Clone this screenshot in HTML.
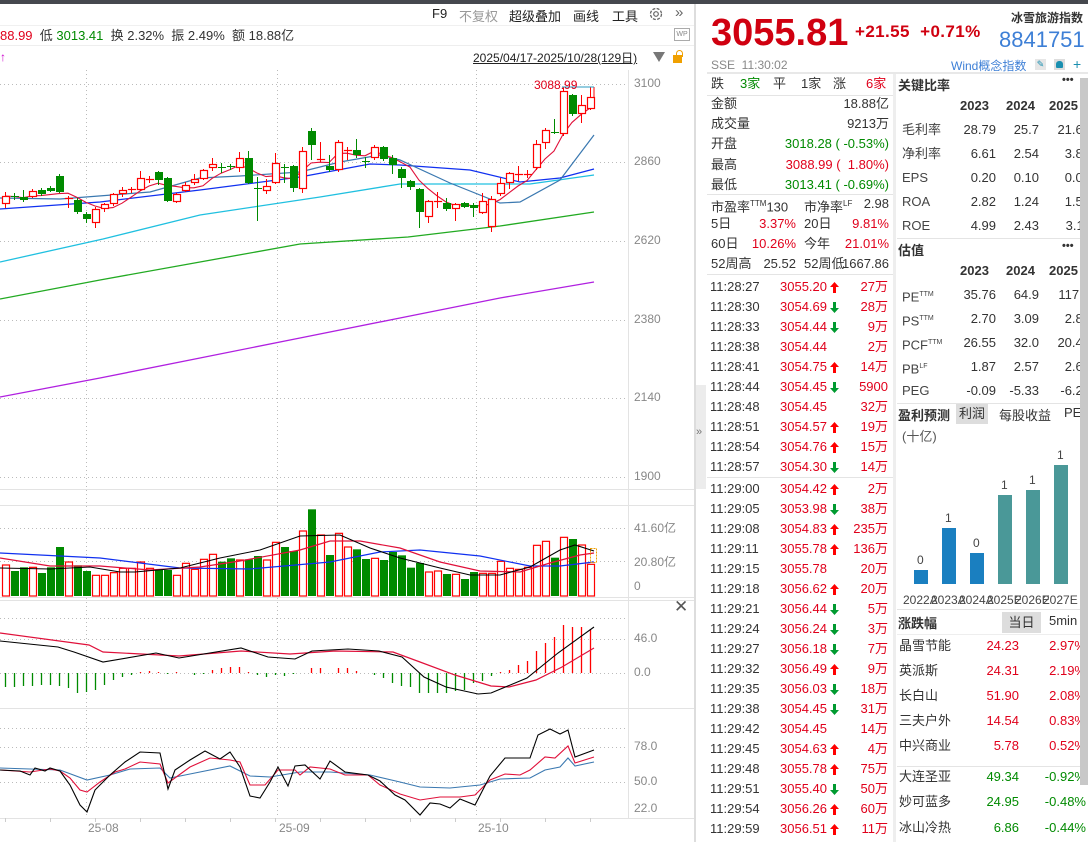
<!DOCTYPE html>
<html><head><meta charset="utf-8">
<style>
*{margin:0;padding:0;box-sizing:border-box}
body{width:1088px;height:842px;overflow:hidden;background:#fff;font-family:"Liberation Sans","Noto Sans CJK SC",sans-serif;color:#333;position:relative}
.a{position:absolute;white-space:nowrap}
.r{color:#e0001b}.g{color:#008a00}.gr{color:#888}
.tk{position:absolute;left:710px;width:178px;height:20px;font-size:13px;line-height:20px}
.tk span{position:absolute}
.tk svg{position:absolute;top:5px;left:120px}
.row{position:absolute;font-size:13px;line-height:20px}
</style></head><body>
<div class="a" style="left:0;top:0;width:1088px;height:4px;background:#45484e"></div>
<div class="a" style="left:0;top:4px;width:694px;height:22px;border-bottom:1px solid #f0f0f0"></div>
<div class="a" style="left:432px;top:6px;font-size:13px;color:#222">F9</div>
<div class="a" style="left:459px;top:6px;font-size:13px;color:#999">不复权</div>
<div class="a" style="left:509px;top:6px;font-size:13px;color:#222">超级叠加</div>
<div class="a" style="left:573px;top:6px;font-size:13px;color:#222">画线</div>
<div class="a" style="left:612px;top:6px;font-size:13px;color:#222">工具</div>
<svg class="a" style="left:648px;top:6px" width="16" height="16" viewBox="0 0 16 16"><circle cx="8" cy="8" r="5.5" fill="none" stroke="#666" stroke-width="1.3" stroke-dasharray="3 1.4"/><circle cx="8" cy="8" r="2.3" fill="none" stroke="#666" stroke-width="1.2"/></svg>
<div class="a" style="left:675px;top:4px;font-size:15px;color:#666">»</div>
<div class="a" style="left:0;top:27px;font-size:13px;line-height:18px"><span class="r">88.99</span> &nbsp;低 <span class="g">3013.41</span> &nbsp;换 2.32% &nbsp;振 2.49% &nbsp;额 18.88亿</div>
<div class="a" style="left:674px;top:28px;width:16px;height:13px;border:1px solid #aaa;font-size:7px;color:#888;text-align:center;line-height:11px">WP</div>
<div class="a" style="left:0;top:45px;width:694px;border-top:1px solid #eee"></div>
<div class="a" style="left:0;top:50px;color:#c0c;font-size:12px">↑</div>
<div class="a" style="left:473px;top:49px;font-size:12px;text-decoration:underline;color:#222">2025/04/17-2025/10/28(129日)</div>
<div class="a" style="left:653px;top:52px;width:0;height:0;border-left:6px solid transparent;border-right:6px solid transparent;border-top:10px solid #777"></div>
<div class="a" style="left:673px;top:55px;width:9px;height:8px;background:#f0a000"></div>
<div class="a" style="left:676px;top:50px;width:7px;height:7px;border:1.5px solid #f0a000;border-bottom:none;border-radius:4px 4px 0 0"></div>

<svg id="ch" class="a" style="left:0;top:0" width="696" height="842"></svg>

<div class="a gr" style="left:634px;top:76px;font-size:12px">3100</div>
<div class="a gr" style="left:634px;top:154px;font-size:12px">2860</div>
<div class="a gr" style="left:634px;top:233px;font-size:12px">2620</div>
<div class="a gr" style="left:634px;top:312px;font-size:12px">2380</div>
<div class="a gr" style="left:634px;top:390px;font-size:12px">2140</div>
<div class="a gr" style="left:634px;top:469px;font-size:12px">1900</div>
<div class="a r" style="left:534px;top:78px;font-size:12px">3088.99</div>
<div class="a gr" style="left:634px;top:519px;font-size:12px">41.60亿</div>
<div class="a gr" style="left:634px;top:553px;font-size:12px">20.80亿</div>
<div class="a gr" style="left:634px;top:579px;font-size:12px">0</div>
<div class="a" style="left:674px;top:597px;font-size:17px;color:#555">✕</div>
<div class="a gr" style="left:634px;top:631px;font-size:12px">46.0</div>
<div class="a gr" style="left:634px;top:665px;font-size:12px">0.0</div>
<div class="a gr" style="left:634px;top:739px;font-size:12px">78.0</div>
<div class="a gr" style="left:634px;top:774px;font-size:12px">50.0</div>
<div class="a gr" style="left:634px;top:801px;font-size:12px">22.0</div>
<div class="a gr" style="left:88px;top:821px;font-size:12px">25-08</div>
<div class="a gr" style="left:279px;top:821px;font-size:12px">25-09</div>
<div class="a gr" style="left:478px;top:821px;font-size:12px">25-10</div>

<div class="a" style="left:694px;top:4px;width:2px;height:838px;background:#ddd"></div>
<div class="a" style="left:696px;top:385px;width:10px;height:104px;background:#ececec"></div>
<div class="a" style="left:696px;top:426px;font-size:11px;color:#777">»</div>

<div class="a" style="left:711px;top:11px;font-size:38px;font-weight:bold;color:#d00010;line-height:44px">3055.81</div>
<div class="a" style="left:855px;top:22px;font-size:17px;font-weight:bold;color:#d00010;letter-spacing:0.4px">+21.55 &nbsp;+0.71%</div>
<div class="a" style="left:1011px;top:9px;font-size:12px;font-weight:bold;color:#333">冰雪旅游指数</div>
<div class="a" style="left:999px;top:27px;font-size:22px;color:#3d7fd6">8841751</div>
<div class="a gr" style="left:711px;top:58px;font-size:12px">SSE &nbsp;11:30:02</div>
<div class="a" style="left:951px;top:57px;font-size:12px;color:#3d7fd6">Wind概念指数</div>
<div class="a" style="left:1035px;top:59px;width:11px;height:11px;background:#e6e6e6;color:#1a8fb0;font-size:9px;text-align:center;line-height:11px">✎</div>
<div class="a" style="left:1054px;top:59px;width:11px;height:11px;background:#ddd"><div style="margin:2px 2px;width:7px;height:7px;background:#1a8fb0;border-radius:3px 3px 1px 1px"></div></div>
<div class="a" style="left:1073px;top:56px;font-size:14px;color:#1a8fb0">+</div>
<div class="a" style="left:707px;top:72px;width:381px;border-top:2px solid #e8e8e8"></div>

<div class="row" style="left:711px;top:74px;width:178px"><span>跌</span><span class="g" style="position:absolute;left:29px">3家</span><span style="position:absolute;left:62px">平</span><span style="position:absolute;left:90px">1家</span><span style="position:absolute;left:122px">涨</span><span class="r" style="position:absolute;left:155px">6家</span></div>
<div class="a" style="left:707px;top:95px;width:186px;border-top:1px solid #e4e4e4"></div>
<div class="row" style="left:711px;top:94px">金额</div><div class="row" style="left:711px;top:94px;width:178px;text-align:right">18.88亿</div>
<div class="row" style="left:711px;top:114px">成交量</div><div class="row" style="left:711px;top:114px;width:178px;text-align:right">9213万</div>
<div class="row" style="left:711px;top:134px">开盘</div><div class="row g" style="left:711px;top:134px;width:178px;text-align:right">3018.28 ( -0.53%)</div>
<div class="row" style="left:711px;top:155px">最高</div><div class="row r" style="left:711px;top:155px;width:178px;text-align:right">3088.99 ( &nbsp;1.80%)</div>
<div class="row" style="left:711px;top:175px">最低</div><div class="row g" style="left:711px;top:175px;width:178px;text-align:right">3013.41 ( -0.69%)</div>
<div class="a" style="left:707px;top:194px;width:186px;border-top:1px solid #e4e4e4"></div>
<div class="row" style="left:711px;top:194px">市盈率<sup style="font-size:8px">TTM</sup>130</div><div class="row" style="left:804px;top:194px">市净率<sup style="font-size:8px">LF</sup></div><div class="row" style="left:804px;top:194px;width:85px;text-align:right">2.98</div>
<div class="row" style="left:711px;top:214px">5日</div><div class="row r" style="left:711px;top:214px;width:85px;text-align:right">3.37%</div><div class="row" style="left:804px;top:214px">20日</div><div class="row r" style="left:804px;top:214px;width:85px;text-align:right">9.81%</div>
<div class="row" style="left:711px;top:234px">60日</div><div class="row r" style="left:711px;top:234px;width:85px;text-align:right">10.26%</div><div class="row" style="left:804px;top:234px">今年</div><div class="row r" style="left:804px;top:234px;width:85px;text-align:right">21.01%</div>
<div class="row" style="left:711px;top:254px">52周高</div><div class="row" style="left:711px;top:254px;width:85px;text-align:right">25.52</div><div class="row" style="left:804px;top:254px">52周低</div><div class="row" style="left:804px;top:254px;width:85px;text-align:right">1667.86</div>
<div class="a" style="left:707px;top:274px;width:186px;border-top:1px solid #e4e4e4"></div>
<div id="ticks"></div>
<div class="a" style="left:893px;top:74px;width:3px;height:768px;background:#eee"></div>

<div class="a" style="left:898px;top:75px;font-size:13px;font-weight:bold">关键比率</div>
<div class="a" style="left:1062px;top:74px;font-size:11px;font-weight:bold">•••</div>
<div id="rat"></div>
<div class="a" style="left:897px;top:238px;width:183px;border-top:1px solid #e4e4e4"></div>
<div class="a" style="left:898px;top:240px;font-size:13px;font-weight:bold">估值</div>
<div class="a" style="left:1062px;top:240px;font-size:11px;font-weight:bold">•••</div>
<div class="a" style="left:897px;top:403px;width:183px;border-top:1px solid #e4e4e4"></div>
<div class="a" style="left:898px;top:405px;font-size:13px;font-weight:bold">盈利预测</div>
<div class="a" style="left:956px;top:404px;width:32px;height:20px;background:#ddd;font-size:13px;line-height:20px;padding-left:3px">利润</div>
<div class="a" style="left:999px;top:405px;font-size:13px">每股收益</div>
<div class="a" style="left:1064px;top:405px;font-size:13px">PE</div>
<div class="a" style="left:902px;top:426px;font-size:13px;color:#555">(十亿)</div>
<div id="bars"></div>
<div class="a" style="left:897px;top:609px;width:183px;border-top:1px solid #e4e4e4"></div>
<div class="a" style="left:898px;top:613px;font-size:13px;font-weight:bold">涨跌幅</div>
<div class="a" style="left:1002px;top:612px;width:39px;height:21px;background:#ddd;font-size:13px;line-height:21px;text-align:center">当日</div>
<div class="a" style="left:1049px;top:613px;font-size:13px">5min</div>
<div class="a" style="left:897px;top:634px;width:183px;border-top:1px solid #eee"></div>
<div id="chg"></div>
<div class="a" style="left:897px;top:766px;width:183px;border-top:1px solid #e4e4e4"></div>
<div class="a" style="left:1080px;top:78px;width:8px;height:707px;background:#c8c8c8"></div>

<script>
var s=document.getElementById('ch'),h='';
function L(x1,y1,x2,y2,c,w,d){h+='<line x1="'+x1+'" y1="'+y1+'" x2="'+x2+'" y2="'+y2+'" stroke="'+c+'" stroke-width="'+(w||1)+'"'+(d?' stroke-dasharray="'+d+'"':'')+'/>';}
function P(pts,c,w){h+='<polyline fill="none" stroke="'+c+'" stroke-width="'+(w||1)+'" points="'+pts.map(function(p){return p.join(',')}).join(' ')+'"/>';}
[84,162,241,320,398,477,528,561,618,639,673,728,747,782].forEach(function(y){L(0,y+.5,628,y+.5,'#bbb',1,'1 3');});
[86,277,476].forEach(function(x){L(x+.5,70,x+.5,818,'#bbb',1,'1 3');});
L(628.5,70,628.5,818,'#e3e3e3');
[489,505,597,600,708,818].forEach(function(y){L(0,y+.5,694,y+.5,'#e3e3e3');});
for(var x=5;x<628;x+=45){L(x+.5,818,x+.5,822,'#ccc');}
P([[0,397],[100,378],[200,358],[300,338],[400,318],[500,298],[594,282]],'#b020e0',1.3);
P([[0,299],[100,280],[200,262],[300,244],[408,237],[500,226],[594,212]],'#22aa22',1.3);
P([[0,262],[103,239],[200,215],[320,197],[400,184],[530,184],[594,175]],'#20c0e0',1.3);
P([[0,209],[100,202],[200,190],[300,177],[370,164],[400,165],[470,170],[520,182],[560,178],[594,169]],'#1030f0',1.3);
P([[0,198],[60,199],[150,192],[200,178],[240,176],[300,172],[340,162],[380,155],[400,160],[450,183],[500,203],[520,202],[560,180],[594,135]],'#3a78b0',1.2);
var C=[[196,204,192,208,1],[196,197,193,200,0],[197,200,190,202,0],[191,197,189,198,1],[190,194,188,196,0],[188,191,186,192,0],[176,192,174,193,0],[198,199,196,208,1],[200,212,198,214,0],[214,219,212,223,0],[209,223,207,228,1],[204,209,203,212,1],[194,204,193,206,1],[190,194,187,197,1],[189,190,187,193,1],[178,190,171,191,1],[179,180,176,183,1],[172,180,171,185,0],[178,201,177,202,0],[194,202,193,203,1],[185,191,182,192,1],[179,183,174,185,1],[170,179,169,180,1],[164,168,158,171,1],[167,168,163,173,0],[166,167,164,170,0],[158,168,152,172,1],[158,183,151,184,0],[188,189,177,221,0],[186,191,179,194,1],[163,183,153,184,1],[167,168,164,183,0],[166,188,165,192,0],[151,189,147,193,1],[131,145,128,160,0],[159,160,142,162,1],[166,170,155,172,0],[142,170,140,172,1],[150,151,147,160,1],[150,155,139,158,0],[161,162,157,168,0],[147,158,145,160,1],[147,159,146,161,0],[158,165,155,174,0],[169,178,167,188,0],[181,187,180,190,0],[189,212,188,228,0],[201,217,200,223,1],[201,202,192,208,1],[203,209,198,211,0],[204,209,203,221,1],[203,207,202,208,0],[205,208,203,217,0],[201,213,193,214,1],[199,227,196,232,1],[183,194,178,196,1],[173,183,172,189,1],[174,175,166,181,1],[174,175,170,178,1],[144,168,140,170,1],[130,143,128,149,1],[132,133,119,134,0],[91,134,87,136,1],[95,114,94,116,0],[105,114,95,123,1],[97,109,87,110,1]];
var cl=C.map(function(c){return c[4]?c[0]:c[1];}),ma=[];
cl.forEach(function(v,i){var a=0,n=0;for(var k=Math.max(0,i-4);k<=i;k++){a+=cl[k];n++;}ma.push([5+9*i,a/n]);});
P(ma,'#e0103a',1.1);
C.forEach(function(c,i){var x=5+9*i,col=c[4]?'#f00':'#008a00';
 L(x+.5,c[2],x+.5,c[0],col);L(x+.5,c[1],x+.5,c[3],col);
 var hh=Math.max(1,c[1]-c[0]);
 if(c[4])h+='<rect x="'+(x-3)+'.5" y="'+(c[0]+.5)+'" width="7" height="'+(hh-1<1?0.01:hh-1)+'" fill="#fff" stroke="#f00" stroke-width="1.2"/>';
 else h+='<rect x="'+(x-3)+'" y="'+c[0]+'" width="8" height="'+hh+'" fill="#008a00"/>';
});
L(594,87,594,97,'#f00');L(562,87,594,87,'#2a9bc0');
var V=[255,273,262,262,279,262,201,246,256,273,286,286,278,265,265,246,265,270,270,286,250,268,238,223,245,235,240,238,228,240,187,201,213,153,88,165,225,160,201,208,237,235,240,216,226,263,249,276,273,282,283,297,276,280,280,244,265,268,262,196,184,233,172,177,195,253];
V.forEach(function(v,i){var x=5+9*i,y=v/3+480,b=596,col=C[i][4];
 if(col)h+='<rect x="'+(x-3)+'.5" y="'+y+'" width="7" height="'+(b-y)+'" fill="#fff" stroke="#f00" stroke-width="1.2"/>';
 else h+='<rect x="'+(x-3)+'" y="'+y+'" width="8" height="'+(b-y)+'" fill="#008a00"/>';});
P([[0,553],[100,558],[180,568],[250,569],[330,562],[380,552],[420,550],[480,556],[530,566],[560,566],[594,562]],'#1030f0',1.2);
P([[0,558],[50,566],[100,566],[150,570],[200,567],[240,561],[300,550],[330,541],[360,541],[400,548],[440,562],[480,571],[520,572],[550,563],[580,555],[594,553]],'#e0103a',1.2);
P([[0,568],[50,569],[90,567],[120,572],[135,572],[180,568],[220,558],[260,550],[300,536],[340,535],[370,548],[400,558],[440,568],[470,575],[500,575],[530,567],[560,550],[575,545],[594,551]],'#000',1.1);
h+='<rect x="590.5" y="548.5" width="6" height="14" fill="none" stroke="#f0a000" stroke-dasharray="2 1"/>';
var M=[-14,-14,-13,-13,-12,-12,-13,-15,-20,-19,-17,-12,-7,-4,-2,1,2,1,-1,1,0,-2,-1,3,5,6,6,1,-2,-4,-2,-3,-1,0,5,5,0,5,5,2,0,-2,-5,-10,-13,-14,-20,-20,-20,-20,-18,-17,-10,-8,-3,1,3,8,12,22,30,36,48,46,46,44];
M.forEach(function(m,i){if(m==0)return;var x=5+9*i+.5;L(x,673,x,673-m,m>0?'#f00':'#008a00',1.3);});
P([[0,633],[89,645],[103,652],[179,656],[241,651],[290,654],[335,651],[393,652],[420,662],[455,675],[491,686],[509,687],[536,680],[562,667],[594,648]],'#e0103a',1.2);
P([[0,641],[58,647],[74,652],[103,662],[156,653],[179,658],[241,648],[268,657],[295,659],[312,651],[348,649],[379,651],[402,657],[424,677],[446,687],[478,694],[491,693],[527,678],[558,653],[594,627]],'#000',1.1);
P([[0,768],[60,770],[87,780],[110,775],[130,769],[160,768],[170,778],[190,774],[230,766],[250,776],[270,777],[300,772],[330,772],[370,775],[400,782],[420,787],[450,788],[480,785],[500,779],[530,778],[545,770],[560,767],[568,758],[575,766],[594,762]],'#3a78b0',1.1);
P([[0,770],[30,772],[50,769],[60,771],[70,778],[80,790],[87,792],[100,782],[115,772],[125,769],[140,762],[160,764],[168,783],[190,767],[210,758],[230,760],[240,762],[250,785],[265,785],[278,770],[295,770],[300,775],[310,767],[330,769],[345,775],[368,775],[380,785],[400,794],[420,800],[440,797],[460,797],[475,795],[490,780],[505,774],[520,775],[530,770],[545,757],[555,758],[568,746],[575,763],[594,757]],'#e0103a',1.1);
P([[0,770],[20,771],[30,775],[35,768],[45,771],[50,768],[60,771],[70,785],[80,805],[87,812],[95,790],[110,775],[125,762],[140,752],[160,753],[168,789],[175,770],[190,760],[205,751],[220,759],[230,752],[240,767],[250,796],[260,798],[270,782],[278,767],[288,786],[295,766],[305,765],[320,779],[330,761],[345,772],[368,775],[380,781],[395,795],[405,800],[420,815],[430,803],[440,804],[450,808],[460,799],[475,805],[490,776],[505,758],[520,758],[530,758],[538,735],[550,729],[560,734],[568,730],[575,757],[594,750]],'#000',1.1);
s.innerHTML=h;

var UP='<svg width="9" height="11" viewBox="0 0 9 11"><path d="M4.5 0 L9 5 H6 V11 H3 V5 H0 Z" fill="#f00"/></svg>';
var DN='<svg width="9" height="11" viewBox="0 0 9 11"><path d="M4.5 11 L9 6 H6 V0 H3 V6 H0 Z" fill="#009a30"/></svg>';
var T=[["11:28:27","3055.20",1,"27万"],["11:28:30","3054.69",0,"28万"],["11:28:33","3054.44",0,"9万"],["11:28:38","3054.44",2,"2万"],["11:28:41","3054.75",1,"14万"],["11:28:44","3054.45",0,"5900"],["11:28:48","3054.45",2,"32万"],["11:28:51","3054.57",1,"19万"],["11:28:54","3054.76",1,"15万"],["11:28:57","3054.30",0,"14万"],["11:29:00","3054.42",1,"2万"],["11:29:05","3053.98",0,"38万"],["11:29:08","3054.83",1,"235万"],["11:29:11","3055.78",1,"136万"],["11:29:15","3055.78",2,"20万"],["11:29:18","3056.62",1,"20万"],["11:29:21","3056.44",0,"5万"],["11:29:24","3056.24",0,"3万"],["11:29:27","3056.18",0,"7万"],["11:29:32","3056.49",1,"9万"],["11:29:35","3056.03",0,"18万"],["11:29:38","3054.45",0,"31万"],["11:29:42","3054.45",2,"14万"],["11:29:45","3054.63",1,"4万"],["11:29:48","3055.78",1,"75万"],["11:29:51","3055.40",0,"50万"],["11:29:54","3056.26",1,"60万"],["11:29:59","3056.51",1,"11万"]];
var th='';T.forEach(function(t,i){var y=277+i*20.05+(i>=10?1:0);
 th+='<div class="tk" style="top:'+y+'px"><span style="left:0;color:#333">'+t[0]+'</span><span class="r" style="left:70px">'+t[1]+'</span>'+(t[2]==1?UP:(t[2]==0?DN:''))+'<span class="r" style="right:0">'+t[3]+'</span></div>';});
th+='<div class="a" style="left:707px;top:477px;width:186px;border-top:1px solid #e4e4e4"></div>';
document.getElementById('ticks').innerHTML=th;
function tab(top,rows){var o='<div class="row" style="left:960px;top:'+top+'px;font-weight:bold">2023</div><div class="row" style="left:1006px;top:'+top+'px;font-weight:bold">2024</div><div class="row" style="left:1049px;top:'+top+'px;font-weight:bold">2025</div>';
 rows.forEach(function(r,i){var y=top+24*(i+1);o+='<div class="row" style="left:902px;top:'+y+'px;color:#444">'+r[0]+'</div><div class="row" style="left:940px;top:'+y+'px;width:56px;text-align:right">'+r[1]+'</div><div class="row" style="left:990px;top:'+y+'px;width:49px;text-align:right">'+r[2]+'</div><div class="row" style="left:1040px;top:'+y+'px;width:50px;text-align:right">'+r[3]+'</div>';});return o;}
document.getElementById('rat').innerHTML=tab(96,[["毛利率","28.79","25.7","21.64"],["净利率","6.61","2.54","3.88"],["EPS","0.20","0.10","0.04"],["ROA","2.82","1.24","1.58"],["ROE","4.99","2.43","3.11"]])+tab(261,[["PE<sup style='font-size:7px'>TTM</sup>","35.76","64.9","117.1"],["PS<sup style='font-size:7px'>TTM</sup>","2.70","3.09","2.86"],["PCF<sup style='font-size:7px'>TTM</sup>","26.55","32.0","20.45"],["PB<sup style='font-size:7px'>LF</sup>","1.87","2.57","2.69"],["PEG","-0.09","-5.33","-6.26"]]);
var B=[[914,570,"#1a7fc0","0","2022A"],[942,528,"#1a7fc0","1","2023A"],[970,553,"#1a7fc0","0","2024A"],[998,495,"#4a9898","1","2025E"],[1026,490,"#4a9898","1","2026E"],[1054,465,"#4a9898","1","2027E"]];
var bh='';B.forEach(function(b){bh+='<div class="a" style="left:'+b[0]+'px;top:'+b[1]+'px;width:14px;height:'+(584-b[1])+'px;background:'+b[2]+'"></div><div class="a" style="left:'+(b[0]+3)+'px;top:'+(b[1]-17)+'px;font-size:12px;color:#444">'+b[3]+'</div><div class="a" style="left:'+(b[0]-11)+'px;top:593px;font-size:12px;color:#444">'+b[4]+'</div>';});
document.getElementById('bars').innerHTML=bh;
var G=[["晶雪节能","24.23","2.97%",1,636],["英派斯","24.31","2.19%",1,661],["长白山","51.90","2.08%",1,686],["三夫户外","14.54","0.83%",1,711],["中兴商业","5.78","0.52%",1,736],["大连圣亚","49.34","-0.92%",0,767],["妙可蓝多","24.95","-0.48%",0,792],["冰山冷热","6.86","-0.44%",0,818]];
var gh='';G.forEach(function(g){var c=g[3]?'r':'g';gh+='<div class="row" style="left:899px;top:'+g[4]+'px">'+g[0]+'</div><div class="row '+c+'" style="left:960px;top:'+g[4]+'px;width:59px;text-align:right">'+g[1]+'</div><div class="row '+c+'" style="left:1020px;top:'+g[4]+'px;width:66px;text-align:right">'+g[2]+'</div>';});
document.getElementById('chg').innerHTML=gh;
</script>
</body></html>
